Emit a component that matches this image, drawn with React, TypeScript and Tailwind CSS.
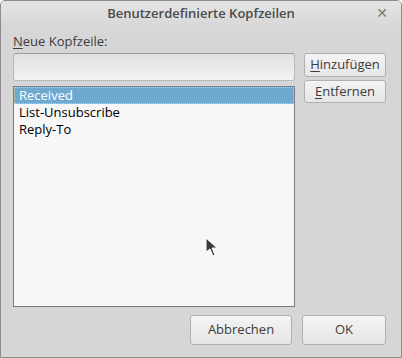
import React from 'react'

const font = { fontFamily: '"Open Sans", "Noto Sans", "DejaVu Sans", sans-serif' }

function Btn({ children, className }: { children: React.ReactNode, className: string }) {
	return (
		<div className={`flex items-center justify-center rounded-[3px] border border-[#b0b0b0] bg-gradient-to-b from-[#f4f4f4] to-[#e6e6e6] text-[13px] text-[#3c3c3c] ${className}`}>
			{children}
		</div>
	)
}

export default function App() {
	const items = ['Received', 'List-Unsubscribe', 'Reply-To']

	return (
		<div style={font} className="relative w-[402px] h-[358px] overflow-hidden rounded-t-[5px] border border-[#8d8d8d] bg-[#d6d6d6] text-[#3c3c3c]">
			{/* title bar */}
			<div className="relative flex h-[25px] items-center justify-center bg-gradient-to-b from-[#e4e4e4] to-[#d8d8d8]">
				<span className="text-[13px] font-semibold text-[#4a4a4a]">Benutzerdefinierte Kopfzeilen</span>
				<span className="absolute right-[13px] top-[5px] text-[14px] font-bold leading-[14px] text-[#7a7a7a]">✕</span>
			</div>

			<div className="px-[12px]">
				<div className="h-[27px] pt-[6px] text-[13px] leading-[18px]">
					<span className="underline underline-offset-2">N</span>eue Kopfzeile:
				</div>

				<div className="flex gap-[9px]">
					<div className="flex w-[282px] flex-col gap-[5px]">
						<div className="h-[28px] rounded-[3px] border border-t-[#9c9c9c] border-[#b8b8b8] bg-gradient-to-b from-[#e2e2e2] to-[#f2f2f2]" />
						<div className="h-[221px] border border-[#7d7d7d] bg-[#f7f7f7] text-[13px] text-black">
							{items.map((it, i) => (
								<div
									key={it}
									className={i === 0
										? 'h-[17px] border border-dotted border-[#e2d27c] bg-[#6fa9cf] pl-[4px] leading-[15px] text-white'
										: 'h-[17px] pl-[5px] leading-[17px]'}
								>
									{it}
								</div>
							))}
						</div>
					</div>

					<div className="flex w-[82px] flex-col gap-[3px]">
						<Btn className="h-[24px]"><span><span className="underline underline-offset-2">H</span>inzufügen</span></Btn>
						<Btn className="h-[23px]"><span><span className="underline underline-offset-2">E</span>ntfernen</span></Btn>
					</div>
				</div>

				<div className="mt-[8px] flex justify-end gap-[10px] pr-[3px]">
					<Btn className="h-[30px] w-[102px]">Abbrechen</Btn>
					<Btn className="h-[30px] w-[84px]">OK</Btn>
				</div>
			</div>

			{/* mouse pointer */}
			<svg className="absolute left-[204px] top-[236px]" width="14" height="20" viewBox="0 0 14 20">
				<path d="M1 1 L1 15 L5 12 L8 19 L10 18 L7 11 L12 11 Z" fill="#3a3a3a" stroke="#ffffff" strokeWidth="1" />
			</svg>
		</div>
	)
}
